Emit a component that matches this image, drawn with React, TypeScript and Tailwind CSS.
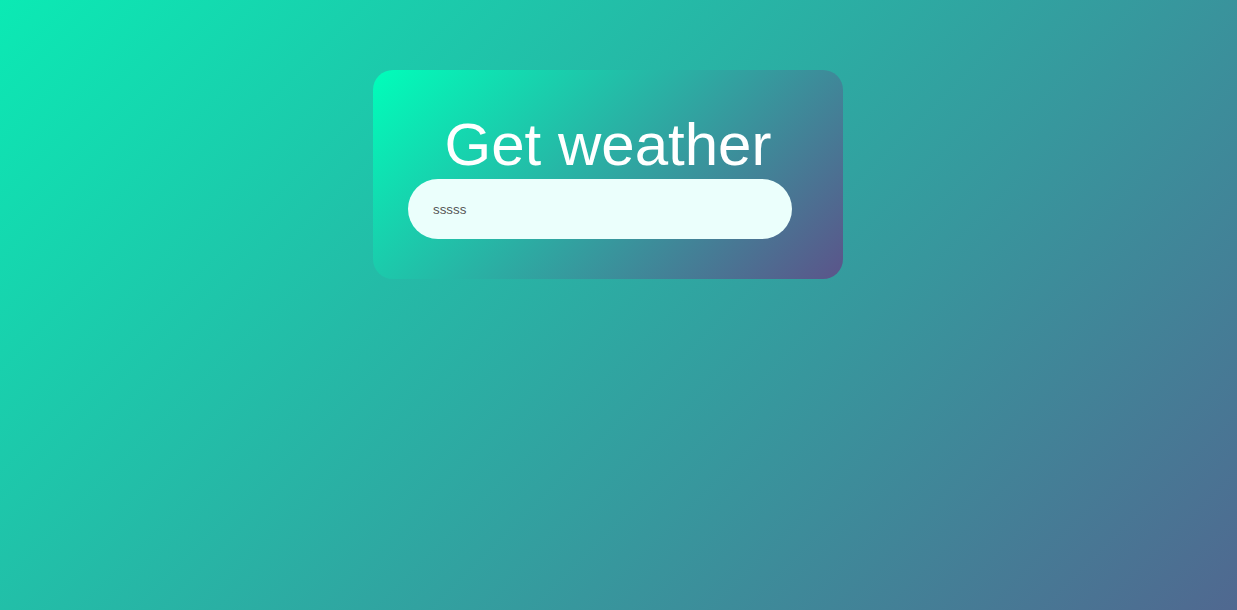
export default function App() {
  return (
    <div
      className="min-h-screen w-full bg-[linear-gradient(135deg,#0beab4,#506890)] pt-[70px]"
      style={{ fontFamily: '"Liberation Sans", Arial, sans-serif' }}
    >
      <div className="ml-[373px] w-[470px] rounded-[20px] bg-[linear-gradient(135deg,#00feba,#5b548a)] px-[35px] py-[40px] text-center text-white">
        <h1 className="text-[60px] font-normal leading-[69px]">Get weather</h1>
        <div className="flex">
          <input
            defaultValue="sssss"
            className="h-[60px] w-[384px] rounded-[30px] bg-[#ebfffc] px-[25px] text-[13.33px] text-[#555] outline-none"
            style={{ fontFamily: '"Liberation Sans", Arial, sans-serif' }}
          />
        </div>
      </div>
    </div>
  );
}
